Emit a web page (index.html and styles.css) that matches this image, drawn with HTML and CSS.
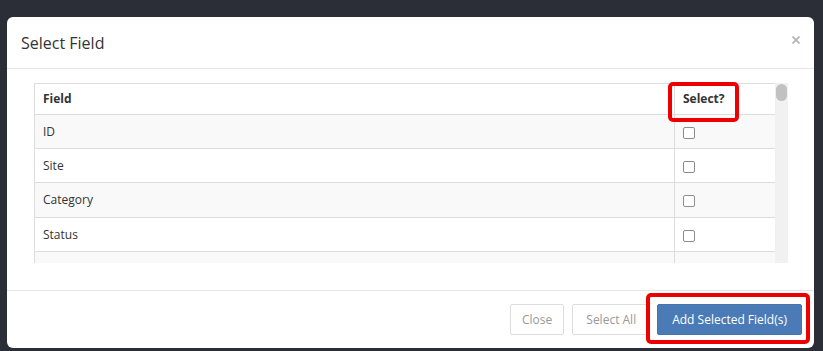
FILE: index.html
```html
<!DOCTYPE html>
<html>
<head>
<meta charset="utf-8">
<link rel="stylesheet" href="styles.css">
</head>
<body>
<div class="modal">
  <div class="modal-header">
    <h4 class="modal-title">Select Field</h4>
    <svg class="close" width="8" height="8" viewBox="0 0 8 8"><path d="M0.5 0.5 L7.5 7.5 M7.5 0.5 L0.5 7.5" stroke="#b5b5b5" stroke-width="1.8" fill="none"/></svg>
  </div>
  <div class="modal-body">
    <div class="scroll">
      <div class="table-view">
        <table class="fields">
          <colgroup><col class="c-field"><col class="c-select"></colgroup>
          <thead>
            <tr><th>Field</th><th>Select?</th></tr>
          </thead>
          <tbody>
            <tr><td>ID</td><td><span class="cb"></span></td></tr>
            <tr><td>Site</td><td><span class="cb"></span></td></tr>
            <tr><td>Category</td><td><span class="cb"></span></td></tr>
            <tr><td>Status</td><td><span class="cb"></span></td></tr>
            <tr><td>&nbsp;</td><td><span class="cb"></span></td></tr>
          </tbody>
        </table>
      </div>
      <div class="track"><div class="thumb"></div></div>
    </div>
  </div>
  <div class="modal-footer">
    <button class="btn btn-close">Close</button>
    <button class="btn btn-all">Select All</button>
    <button class="btn btn-primary">Add Selected Field(s)</button>
  </div>
</div>
<div class="annot annot-select"></div>
<div class="annot annot-add"></div>
</body>
</html>
```

FILE: styles.css
```css
html, body {
  margin: 0;
  padding: 0;
}
body {
  background: #2b2d37;
  font-family: "Open Sans", "Noto Sans", sans-serif;
  color: #333;
  width: 823px;
  height: 351px;
  overflow: hidden;
  position: relative;
}
.modal {
  margin: 17px 0 0 7px;
  width: 807px;
  height: 331px;
  background: #fff;
  border-radius: 6px;
  display: flex;
  flex-direction: column;
  box-sizing: border-box;
}
.modal-header {
  height: 52px;
  box-sizing: border-box;
  border-bottom: 1px solid #e5e5e5;
  padding: 0 14px 0 14px;
  display: flex;
  align-items: center;
  justify-content: space-between;
}
.modal-title {
  margin: 0;
  font-size: 16px;
  font-weight: 400;
  color: #333;
  line-height: 20px;
  padding-left: 0;
}
.close {
  align-self: flex-start;
  margin-top: 19px;
  display: block;
}
.modal-body {
  height: 221px;
  box-sizing: border-box;
  padding: 14px 26px 27px 27px;
}
.scroll {
  display: flex;
  height: 180px;
  width: 754px;
}
.table-view {
  width: 741px;
  height: 180px;
  overflow: hidden;
}
.track {
  width: 13px;
  height: 180px;
  background: #f1f1f1;
  box-sizing: border-box;
  padding: 1px 1px 0 1px;
}
.thumb {
  width: 11px;
  height: 17px;
  border-radius: 6px;
  background: #c1c1c1;
}
.fields {
  border-collapse: collapse;
  width: 741px;
  table-layout: fixed;
  font-size: 12px;
  line-height: 1.42857;
}
.c-field { width: 640px; }
.c-select { width: 101px; }
.fields th,
.fields td {
  border: 1px solid #ddd;
  padding: 8px 8px;
  text-align: left;
  vertical-align: top;
}
.fields th {
  font-weight: 700;
  padding: 6px 8px 7px;
}
.fields tbody tr:nth-child(odd) td {
  background: #f9f9f9;
}
.cb {
  display: block;
  width: 10px;
  height: 10px;
  margin-top: 4px;
  border: 1px solid #8c8c8c;
  border-radius: 2px;
  background: #fff;
}
.modal-footer {
  flex: 1;
  border-top: 1px solid #e5e5e5;
  padding: 13px 12px 0 0;
  display: flex;
  justify-content: flex-end;
  align-items: flex-start;
  gap: 8px;
}
.btn {
  font-family: "Open Sans", "Noto Sans", sans-serif;
  font-size: 12px;
  line-height: 17px;
  padding: 6px 11px;
  border: 1px solid #ddd;
  border-radius: 2px;
  background: #fff;
  color: #999;
  margin: 0;
}
.btn-all {
  padding: 6px 13px;
}
.btn-primary {
  background: #4a7bb7;
  border-color: #4574ad;
  color: #fff;
  padding: 6px 14px;
  margin-left: -1px;
}
.annot {
  position: absolute;
  border: 4px solid #ee0000;
  border-radius: 5px;
  box-sizing: border-box;
}
.annot-select {
  left: 668px;
  top: 82px;
  width: 71px;
  height: 40px;
}
.annot-add {
  left: 646px;
  top: 293px;
  width: 164px;
  height: 51px;
}
```
